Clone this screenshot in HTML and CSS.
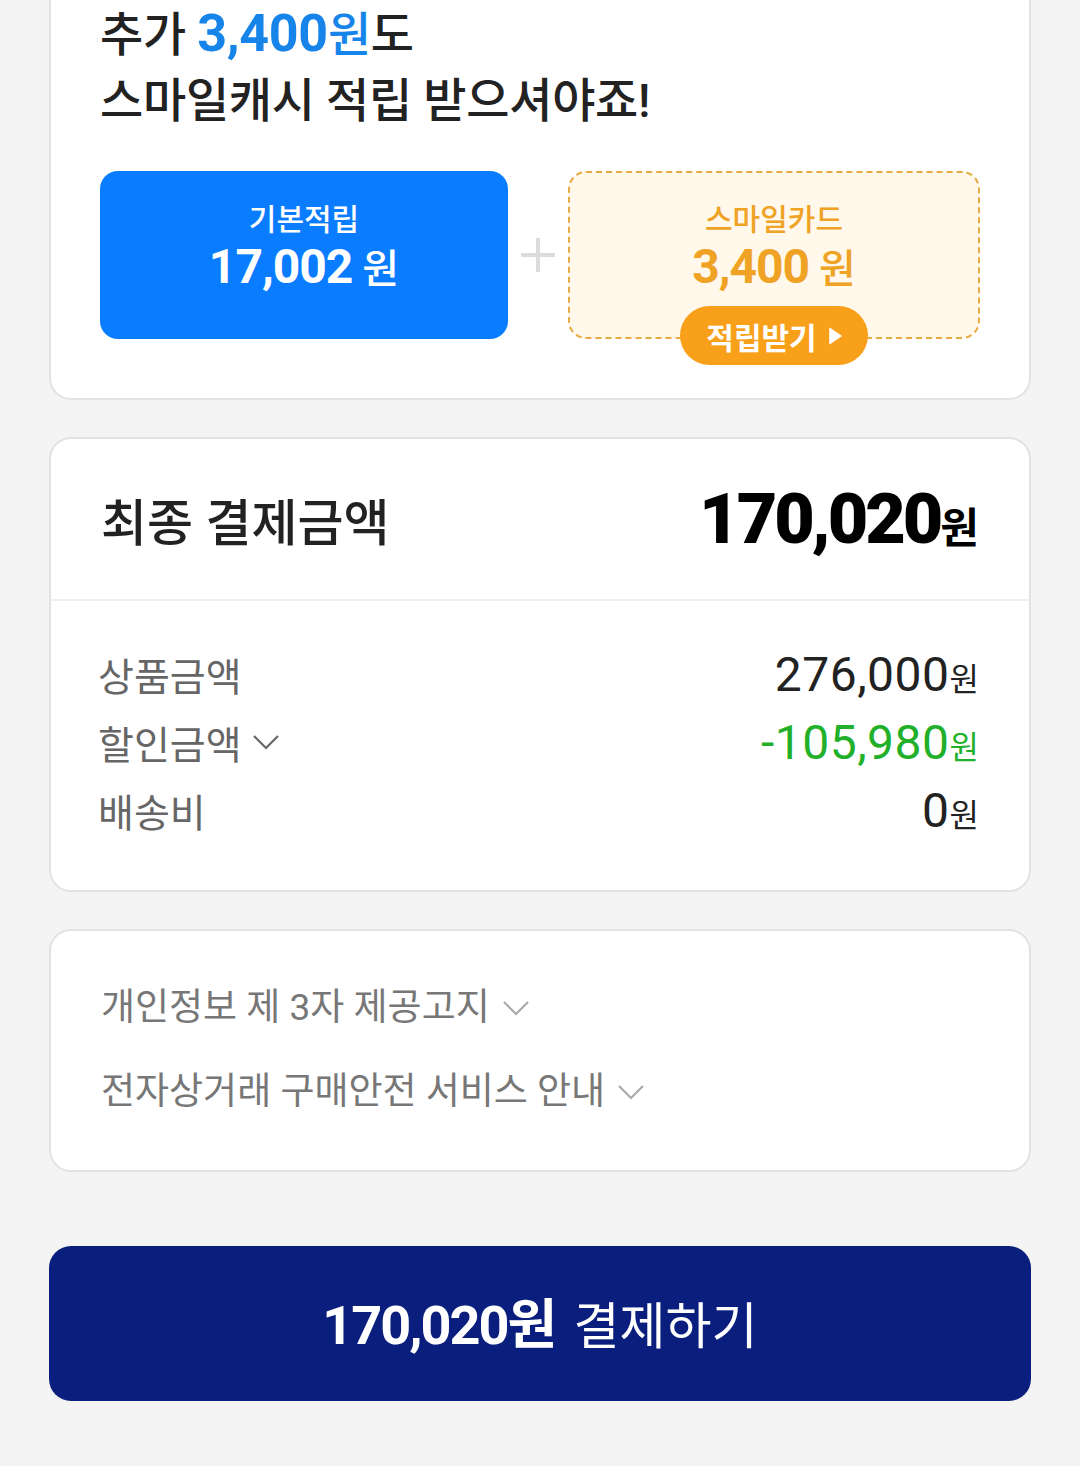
FILE: index.html
```html
<!DOCTYPE html>
<html lang="ko">

<head>
    <meta charset="UTF-8">
    <meta name="viewport" content="width=device-width, initial-scale=1.0">
    <title>결제하기</title>
    <link rel="stylesheet" href="styles.css">
</head>

<body>
    <div class="page">
        <div class="card reward">
            <h2 class="reward-title">
                추가 <span class="hl"><b>3,400</b>원</span>도<br>
                스마일캐시 적립 받으셔야죠!
            </h2>
            <div class="reward-boxes">
                <div class="rbox basic">
                    <div class="rbox-label">기본적립</div>
                    <div class="rbox-amount"><b>17,002</b> 원</div>
                </div>
                <div class="plus">
                    <svg width="34" height="34" viewBox="0 0 34 34">
                        <path d="M17 0v34M0 17h34" stroke="#dcdcdc" stroke-width="4" />
                    </svg>
                </div>
                <div class="rbox card-bonus">
                    <div class="rbox-label">스마일카드</div>
                    <div class="rbox-amount"><b>3,400</b> 원</div>
                    <button class="get-btn">적립받기
                        <svg width="13" height="18" viewBox="0 0 13 18">
                            <path d="M1 1.5l11 7.5-11 7.5z" fill="#fff" stroke="#fff" stroke-width="1.5" stroke-linejoin="round" />
                        </svg>
                    </button>
                </div>
            </div>
        </div>

        <div class="card total">
            <div class="total-head">
                <span class="total-label">최종 결제금액</span>
                <span class="total-value"><b>170,020</b><small>원</small></span>
            </div>
            <div class="total-body">
                <div class="row">
                    <span class="row-label">상품금액</span>
                    <span class="row-value">276,000<small>원</small></span>
                </div>
                <div class="row">
                    <span class="row-label">할인금액
                        <svg class="chev" width="28" height="16" viewBox="0 0 28 16">
                            <path d="M2 2l12 12 12-12" fill="none" stroke="#666" stroke-width="2.2" />
                        </svg>
                    </span>
                    <span class="row-value discount">-105,980<small>원</small></span>
                </div>
                <div class="row">
                    <span class="row-label">배송비</span>
                    <span class="row-value">0<small>원</small></span>
                </div>
            </div>
        </div>

        <div class="card notice">
            <div class="notice-item">개인정보 제 3자 제공고지
                <svg class="chev" width="28" height="16" viewBox="0 0 28 16">
                    <path d="M2 2l12 12 12-12" fill="none" stroke="#aaa" stroke-width="2.2" />
                </svg>
            </div>
            <div class="notice-item">전자상거래 구매안전 서비스 안내
                <svg class="chev" width="28" height="16" viewBox="0 0 28 16">
                    <path d="M2 2l12 12 12-12" fill="none" stroke="#aaa" stroke-width="2.2" />
                </svg>
            </div>
        </div>

        <button class="pay-btn"><b>170,020원</b> 결제하기</button>
    </div>
</body>

</html>
```

FILE: styles.css
```css
body {
    margin: 0;
    background-color: #f4f4f4;
    font-family: Roboto, "Noto Sans CJK KR", sans-serif;
    color: #222;
}

.page {
    padding: 0 49px 60px 49px;
}

.card {
    background-color: white;
    border: 2px solid #e2e2e2;
    border-radius: 22px;
    margin-bottom: 37px;
}

/* reward card (top cut off by the viewport) */
.reward {
    border-top: none;
    border-top-left-radius: 0;
    border-top-right-radius: 0;
    padding: 1px 49px 59px 49px;
}

.reward-title {
    margin: 0;
    font-size: 47px;
    font-weight: 500;
    line-height: 66px;
    letter-spacing: -0.3px;
    color: #222;
}

.reward-title .hl {
    color: #1784ea;
}

.reward-title .hl b {
    font-size: 52px;
    font-weight: 700;
}

.reward-boxes {
    display: flex;
    align-items: center;
    margin-top: 37px;
}

.rbox {
    position: relative;
    flex: 1;
    height: 168px;
    box-sizing: border-box;
    border-radius: 18px;
    padding-top: 28px;
    text-align: center;
}

.basic {
    background-color: #0a7cff;
    color: white;
}

.card-bonus {
    background-color: #fff8eb;
    border: 2px dashed #e6ac43;
    color: #efa224;
    padding-top: 26px;
}

.plus {
    width: 60px;
    display: flex;
    justify-content: center;
}

.rbox-label {
    font-size: 30px;
    line-height: 42px;
    font-weight: 500;
}

.rbox-amount {
    font-size: 40px;
    line-height: 52px;
    font-weight: 500;
}

.rbox-amount b {
    font-size: 48px;
    font-weight: 700;
    letter-spacing: -1px;
}

.get-btn {
    position: absolute;
    left: 50%;
    bottom: -28px;
    transform: translateX(-50%);
    width: 188px;
    height: 59px;
    border: none;
    border-radius: 30px;
    background-color: #f9a01b;
    color: white;
    font-family: "Noto Sans CJK KR", sans-serif;
    font-size: 30px;
    font-weight: 700;
    display: flex;
    align-items: center;
    justify-content: center;
    gap: 12px;
    padding: 0;
}

/* total card */
.total-head {
    display: flex;
    justify-content: space-between;
    align-items: center;
    height: 160px;
    padding: 0 50px;
    border-bottom: 2px solid #eeeeee;
}

.total-label {
    font-size: 50px;
    font-weight: 500;
    color: #222;
}

.total-value {
    color: #000;
    font-weight: 700;
}

.total-value b {
    font-size: 70px;
    letter-spacing: -3px;
}

.total-value small {
    font-size: 42px;
    font-weight: 700;
}

.total-body {
    padding: 39px 50px 46px 47px;
}

.row {
    display: flex;
    justify-content: space-between;
    align-items: center;
    height: 68px;
}

.row-label {
    font-size: 39px;
    color: #666;
    display: flex;
    align-items: center;
    gap: 10px;
}

.row-value {
    font-size: 48px;
    color: #222;
    letter-spacing: 0.5px;
}

.row-value small {
    font-size: 32px;
    letter-spacing: 0;
}

.row-value.discount {
    color: #22b02a;
}

/* notice card */
.notice {
    padding: 52px 50px 53px 50px;
}

.notice-item {
    font-size: 37px;
    line-height: 50px;
    color: #777;
    display: flex;
    align-items: center;
    gap: 12px;
}

.notice-item + .notice-item {
    margin-top: 34px;
}

/* pay button */
.pay-btn {
    display: block;
    width: 100%;
    height: 155px;
    margin-top: 74px;
    border: none;
    border-radius: 22px;
    background-color: #0a1f7d;
    color: white;
    font-family: Roboto, "Noto Sans CJK KR", sans-serif;
    font-size: 50px;
    padding-bottom: 8px;
    cursor: pointer;
}

.pay-btn b {
    font-size: 54px;
    letter-spacing: -2px;
    margin-right: 6px;
}
```
